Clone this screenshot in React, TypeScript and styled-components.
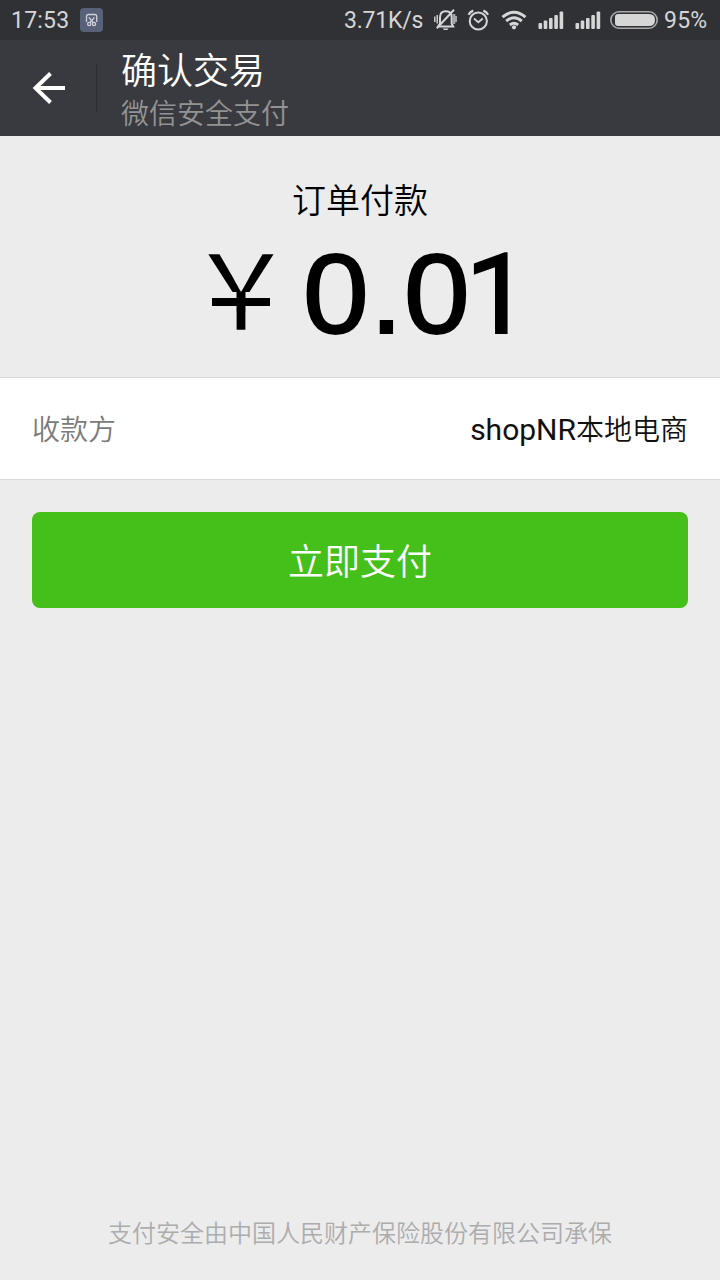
import React from "react";
import styled, { createGlobalStyle } from "styled-components";

const GlobalStyle = createGlobalStyle`
  * { box-sizing: border-box; }
  body { margin: 0; background: #ececec; }
`;

const Screen = styled.div`
  width: 720px;
  height: 1280px;
  display: flex;
  flex-direction: column;
  background: #ececec;
  overflow: hidden;
  font-family: "Liberation Sans", "Noto Sans CJK SC", sans-serif;
`;

const StatusBar = styled.header`
  height: 40px;
  flex: none;
  display: flex;
  align-items: center;
  justify-content: space-between;
  padding: 0 12px 0 11px;
  background: #303135;
  color: #d6d6d6;
  font-family: Roboto, sans-serif;
  font-size: 23px;
  line-height: 40px;
`;

const StatusGroup = styled.div`
  display: flex;
  align-items: center;
  height: 40px;
`;

const StatusText = styled.span<{ $width: number; $gap?: number; $spacing?: number }>`
  width: ${(p) => p.$width}px;
  margin-right: ${(p) => p.$gap ?? 0}px;
  letter-spacing: ${(p) => p.$spacing ?? 0}px;
  white-space: nowrap;
  padding-top: 2px;
`;

const StatusIcon = styled.svg<{ $gap?: number }>`
  display: block;
  flex: none;
  margin-right: ${(p) => p.$gap ?? 0}px;
`;

const TitleBar = styled.div`
  height: 96px;
  flex: none;
  display: flex;
  align-items: center;
  background: #393a3f;
`;

const BackButton = styled.button`
  width: 96px;
  height: 96px;
  padding: 0 0 0 32px;
  border: 0;
  background: none;
  display: flex;
  align-items: center;
`;

const Divider = styled.div`
  width: 1px;
  height: 48px;
  background: #2c2d31;
`;

const Titles = styled.div`
  height: 96px;
  padding: 6px 0 0 24px;
  font-family: "Noto Sans CJK SC", sans-serif;
`;

const Title = styled.h1`
  margin: 0;
  font-size: 36px;
  font-weight: 350;
  line-height: 44px;
  color: #fff;
`;

const Subtitle = styled.div`
  font-size: 28px;
  font-weight: 350;
  line-height: 44px;
  color: #939393;
`;

const Summary = styled.section`
  height: 241px;
  flex: none;
  display: flex;
  flex-direction: column;
  align-items: center;
  padding-top: 39px;
  color: #000;
`;

const OrderLabel = styled.div`
  font-family: "Noto Sans CJK SC", sans-serif;
  font-size: 34px;
  font-weight: 350;
  line-height: 48px;
`;

const Amount = styled.div`
  width: 720px;
  height: 120px;
  display: flex;
  margin-top: 8px;
  padding-left: 189px;
  line-height: 120px;
  white-space: nowrap;
`;

const Currency = styled.span`
  position: relative;
  width: 114px;

  /* The crossbar of the yuan sign */
  &::after {
    content: "";
    position: absolute;
    left: 23px;
    top: 67px;
    width: 58px;
    height: 8px;
    background: #000;
  }
`;

/* Keeps only the arms and the stem of the sign */
const CurrencyGlyph = styled.span`
  display: block;
  width: 104px;
  height: 120px;
  line-height: 108px;
  text-align: center;
  font-family: "Noto Sans CJK SC", sans-serif;
  font-size: 104px;
  clip-path: polygon(0 0, 104px 0, 104px 61px, 56.5px 61px, 56.5px 120px, 47.5px 120px, 47.5px 61px, 0 61px);
`;

const Digits = styled.span`
  display: block;
  height: 90px;
  padding-top: 18px;
  line-height: 90px;
  font-size: 113px;
  letter-spacing: 1.2px;
  -webkit-text-stroke: 2px #000;
  transform: scaleX(1.045);
  transform-origin: left center;
`;

const FinalDigit = styled.span`
  margin-left: -5.5px;
  font-family: Roboto, sans-serif;
  font-size: 111px;
`;

const PayeeRow = styled.section`
  height: 103px;
  flex: none;
  display: flex;
  align-items: center;
  justify-content: space-between;
  padding: 0 32px 2px;
  background: #fff;
  border-top: 1px solid #d9d9d9;
  border-bottom: 1px solid #d9d9d9;
  font-family: "Noto Sans CJK SC", sans-serif;
  font-size: 28px;
  font-weight: 350;
`;

const PayeeLabel = styled.span`
  color: #7b7b7b;
`;

const PayeeName = styled.span`
  color: #111;
`;

const Latin = styled.span`
  font-family: Roboto, sans-serif;
  font-size: 30px;
  font-weight: 400;
`;

const PayButton = styled.button`
  height: 96px;
  flex: none;
  margin: 32px 32px 0;
  padding: 0 0 3px;
  border: 0;
  border-radius: 8px;
  background: #45c01a;
  color: #fff;
  font-family: "Noto Sans CJK SC", sans-serif;
  font-size: 36px;
  font-weight: 350;
`;

const Footer = styled.footer`
  margin-top: auto;
  padding-bottom: 30px;
  text-align: center;
  font-family: "Noto Sans CJK SC", sans-serif;
  font-size: 24px;
  font-weight: 350;
  line-height: 36px;
  color: #acacac;
`;

function SignalIcon({ gap }: { gap: number }) {
  return (
    <StatusIcon $gap={gap} width="26" height="18" viewBox="0 0 26 18" fill="#d6d6d6">
      <rect x="0.5" y="12" width="3.6" height="6" rx="1" />
      <rect x="5.7" y="9.5" width="3.6" height="8.5" rx="1" />
      <rect x="11" y="7" width="3.6" height="11" rx="1" />
      <rect x="16.3" y="4" width="3.6" height="14" rx="1" />
      <rect x="21.6" y="0.5" width="3.6" height="17.5" rx="1" />
    </StatusIcon>
  );
}

export default function App() {
  return (
    <>
      <GlobalStyle />
      <Screen>
        <StatusBar>
          <StatusGroup>
            <StatusText $width={58} $gap={11} $spacing={0.2}>17:53</StatusText>
            <StatusIcon width="23" height="24" viewBox="0 0 23 24" fill="none" stroke="#cfd2da" strokeWidth="1.3">
              <rect width="23" height="24" rx="4" fill="#596079" stroke="none" />
              <path d="M6.5 14V8.4Q6.5 6.5 8.4 6.5H14.8Q16.7 6.5 16.7 8.4V14" />
              <path d="M8.8 9.3L13.2 14.5M14.4 9.3L10 14.5" />
              <circle cx="9.2" cy="16" r="1.6" />
              <circle cx="14" cy="16" r="1.6" />
            </StatusIcon>
          </StatusGroup>
          <StatusGroup>
            <StatusText $width={78} $gap={12} $spacing={-0.2}>3.71K/s</StatusText>
            <StatusIcon $gap={9} width="24" height="24" viewBox="0 0 24 24" fill="none" stroke="#d6d6d6" strokeWidth="2">
              <path d="M5 18.5H19.2L17.7 15.7V9.5Q17.7 3.2 11.7 3.2Q6 3.2 6 9.5V15.7L4 18.5" />
              <path d="M2.8 20.2L20 1.8" />
              <path d="M8.7 20.4H14.5L13.3 22H10Z" fill="#d6d6d6" stroke="none" />
              <path d="M0.8 8.5V14M3.2 7V15.5" strokeWidth="1.4" />
              <path d="M18.5 6H21.3V8H23V14H21.3V16H18.5Z" fill="#a4a5a7" stroke="none" />
            </StatusIcon>
            <StatusIcon $gap={11} width="23" height="24" viewBox="0 0 23 24" fill="none" stroke="#d6d6d6" strokeWidth="2">
              <circle cx="11.3" cy="13" r="8.6" />
              <path d="M7 10.5L11.3 14.3L15.8 10.5" strokeWidth="1.8" />
              <path d="M1.5 6.8Q3 3.7 6.3 2.6M21.1 6.8Q19.6 3.7 16.3 2.6" strokeWidth="2.2" />
            </StatusIcon>
            <StatusIcon $gap={11} width="26" height="20" viewBox="0 0 26 20" fill="none" stroke="#d6d6d6" strokeWidth="3">
              <path d="M1.5 7.2Q13 -2.8 24.5 7.2" />
              <path d="M5.2 11.1Q13 4.4 20.8 11.1" />
              <path d="M8.9 15Q13 11.6 17.1 15" />
              <circle cx="13" cy="17.3" r="2.1" fill="#d6d6d6" stroke="none" />
            </StatusIcon>
            <SignalIcon gap={11} />
            <SignalIcon gap={9} />
            <StatusIcon $gap={6} width="48" height="18" viewBox="0 0 48 18" fill="none">
              <rect x="0.8" y="0.8" width="46.4" height="16.4" rx="8.2" stroke="#aaaaac" strokeWidth="1.6" />
              <path d="M8 3H39Q45 3 45 9Q45 15 39 15H8Q5 15 5 12V6Q5 3 8 3Z" fill="#d6d6d6" />
            </StatusIcon>
            <StatusText $width={44} $spacing={0.2}>95%</StatusText>
          </StatusGroup>
        </StatusBar>
        <TitleBar>
          <BackButton aria-label="返回">
            <svg width="34" height="34" viewBox="0 0 34 34" fill="none" stroke="#fff" strokeWidth="4">
              <path d="M18.5 2.5L3.5 17L18.5 31.5M3.5 17H33" />
            </svg>
          </BackButton>
          <Divider />
          <Titles>
            <Title>确认交易</Title>
            <Subtitle>微信安全支付</Subtitle>
          </Titles>
        </TitleBar>
        <Summary>
          <OrderLabel>订单付款</OrderLabel>
          <Amount>
            <Currency>
              <CurrencyGlyph>￥</CurrencyGlyph>
            </Currency>
            <Digits>0.0<FinalDigit>1</FinalDigit></Digits>
          </Amount>
        </Summary>
        <PayeeRow>
          <PayeeLabel>收款方</PayeeLabel>
          <PayeeName><Latin>shopNR</Latin>本地电商</PayeeName>
        </PayeeRow>
        <PayButton>立即支付</PayButton>
        <Footer>支付安全由中国人民财产保险股份有限公司承保</Footer>
      </Screen>
    </>
  );
}
